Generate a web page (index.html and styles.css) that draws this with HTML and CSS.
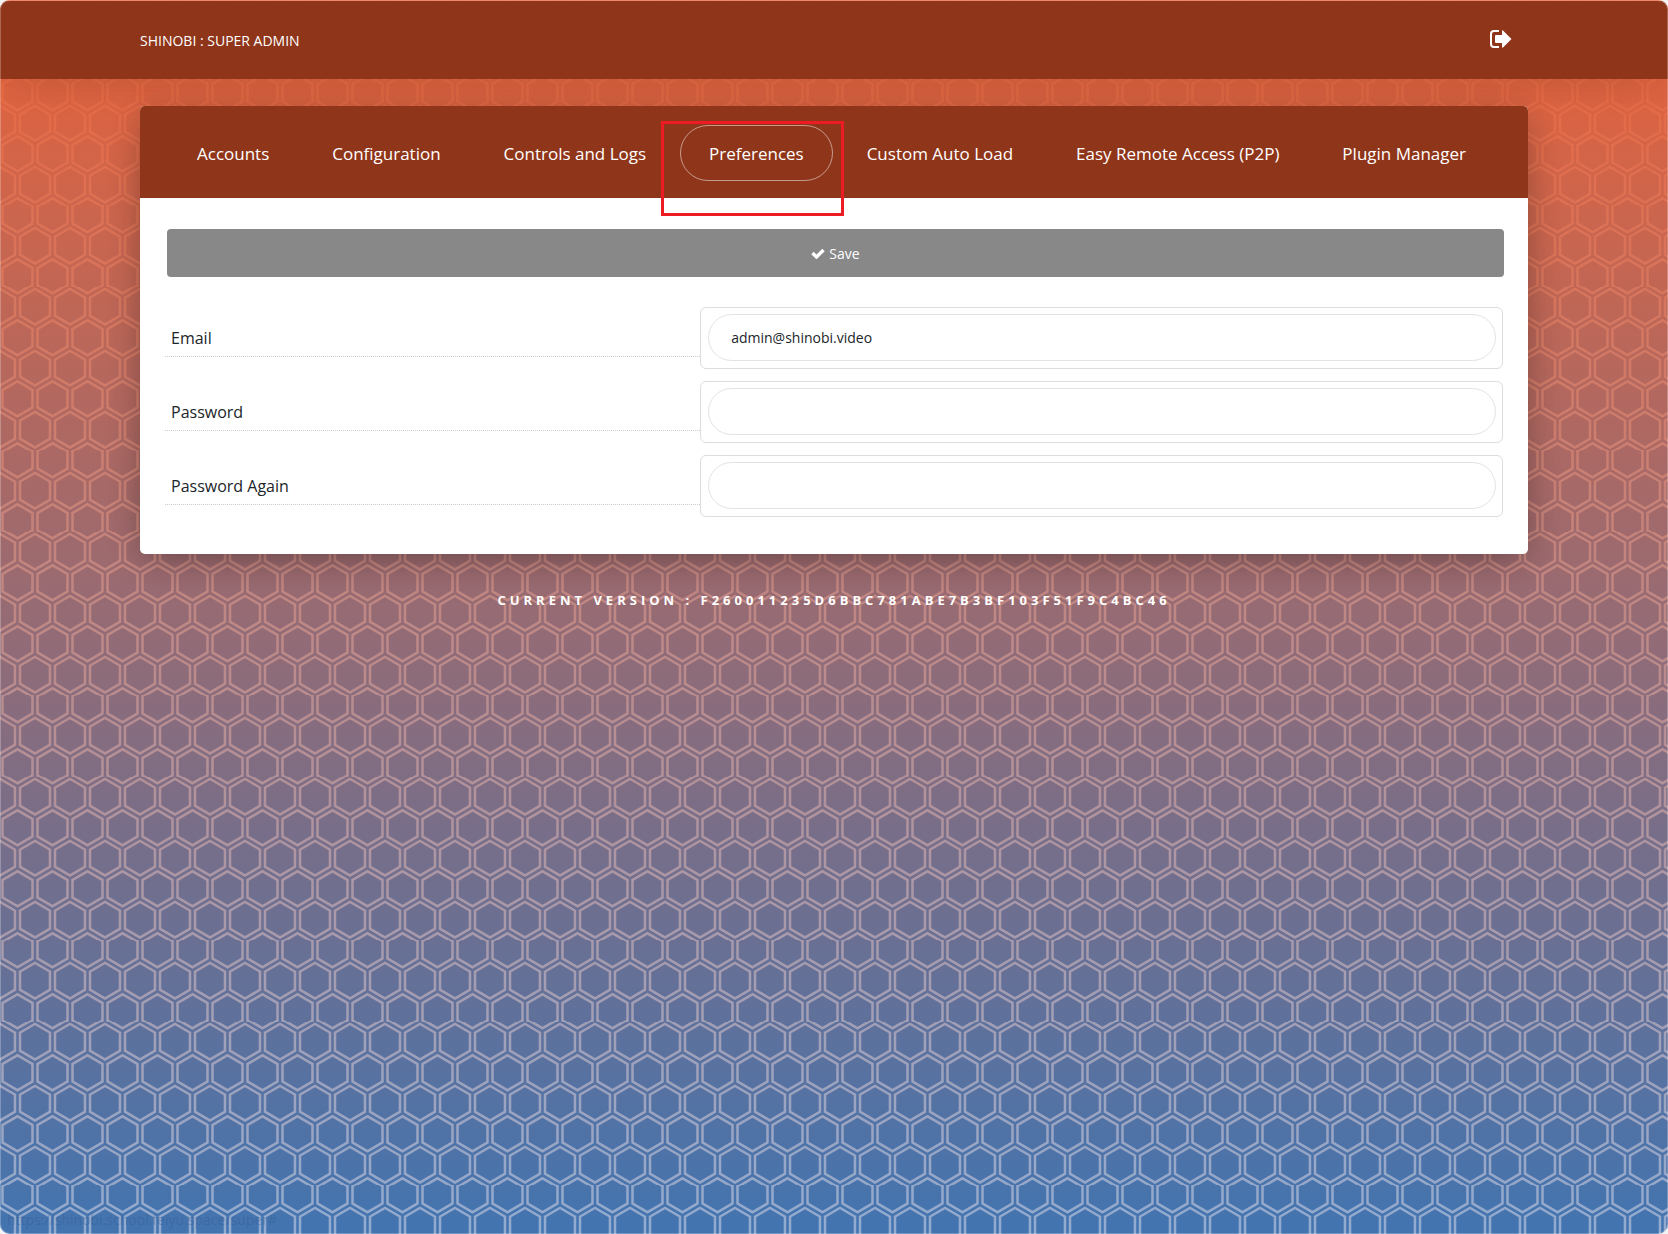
FILE: index.html
```html
<!DOCTYPE html>
<html lang="en">

<head>
    <meta charset="UTF-8">
    <meta name="viewport" content="width=device-width, initial-scale=1.0">
    <title>Shinobi : Super Admin</title>
    <link rel="stylesheet" href="styles.css">
</head>

<body>
    <div class="page">
        <!-- top bar -->
        <header class="navbar">
            <div class="container">
                <a class="brand" href="#">SHINOBI : SUPER ADMIN</a>
                <a class="logout" href="#" aria-label="Logout">
                    <svg viewBox="0 0 22 18" width="22" height="18">
                        <path d="M9 1H4Q1 1 1 4v10q0 3 3 3h5" fill="none" stroke="#fff" stroke-width="2" />
                        <path d="M6 5h6V1q0-1 1-.6L21.500 9 13 17.600q-1 .4-1-.6v-4H6q-1 0-1-1V6q0-1 1-1z" fill="#fff" />
                    </svg>
                </a>
            </div>
        </header>

        <main class="container">
            <div class="card">
                <nav class="tabs">
                    <a href="#">Accounts</a>
                    <a href="#">Configuration</a>
                    <a href="#">Controls and Logs</a>
                    <a class="active" href="#">Preferences</a>
                    <a href="#">Custom Auto Load</a>
                    <a href="#">Easy Remote Access (P2P)</a>
                    <a href="#">Plugin Manager</a>
                </nav>
                <form class="card-body">
                    <button class="save" type="submit">
                        <svg viewBox="0 0 14 11" width="14" height="11">
                            <path d="M1.500 5l4 4L12.500 2" fill="none" stroke="#fff" stroke-width="3.400" />
                        </svg>
                        Save
                    </button>
                    <div class="form-group">
                        <label for="mail">Email</label>
                        <div class="field"><input id="mail" type="text" value="admin@shinobi.video"></div>
                    </div>
                    <div class="form-group">
                        <label for="pass">Password</label>
                        <div class="field"><input id="pass" type="password"></div>
                    </div>
                    <div class="form-group">
                        <label for="pass_again">Password Again</label>
                        <div class="field"><input id="pass_again" type="password"></div>
                    </div>
                </form>
            </div>
            <p class="version">Current Version : f260011235d6bbc781abe7b3bf103f51f9c4bc46</p>
        </main>

        <!-- link preview in the corner -->
        <div class="status">https://shinobi.school.feiyu.space/super#</div>
    </div>
</body>

</html>
```
FILE: styles.css
```css
* {
    box-sizing: border-box;
}

body {
    margin: 0;
    background: #f3f3f3;
    font-family: "Open Sans", "Noto Sans", sans-serif;
    font-size: 16px;
    color: #212529;
}

a {
    color: #fff;
    text-decoration: none;
}

/* hexagons under an orange fade */
.page {
    position: relative;
    min-height: 100vh;
    padding-top: 1px;
    border-radius: 10px;
    overflow: hidden;
    background-color: #4274b0;
    background-image:
        linear-gradient(rgba(241, 97, 50, .95), rgba(241, 97, 50, 0)),
        url("data:image/svg+xml,%3Csvg xmlns='http://www.w3.org/2000/svg' width='28' height='49' viewBox='0 0 28 49'%3E%3Cpath fill='%2392abd0' d='M13.99 9.25l13 7.5v15l-13 7.5L1 31.75v-15l12.99-7.5zM3 17.9v12.7l10.99 6.34 11-6.35V17.9l-11-6.34L3 17.9zM0 15l12.98-7.5V0h-2v6.35L0 12.69v2.3zm0 18.5L12.98 41v8h-2v-6.85L0 35.81v-2.3zM15 0v7.5L27.99 15H28v-2.31h-.01L17 6.35V0h-2zm0 49v-8l12.99-7.5H28v2.31h-.01L17 42.15V49h-2z'/%3E%3C/svg%3E");
    background-size: auto, 35px auto;
    background-position: 0 0, 0 1px;
}

/* thin window edge */
.page::after {
    content: "";
    position: absolute;
    inset: 0;
    border: 1px solid rgba(255, 255, 255, .25);
    border-radius: 10px;
    pointer-events: none;
}

.container {
    width: calc(100% - 32px);
    max-width: 1388px;
    margin: 0 auto;
}

.navbar {
    height: 78px;
    background: #8f3519;
    box-shadow: 0 20px 40px -20px rgba(0, 0, 0, .12), 0 5px 31px 0 rgba(0, 0, 0, .04);
}

.navbar .container {
    display: flex;
    align-items: center;
    justify-content: space-between;
    height: 78px;
}

.brand {
    font-size: 14px;
}

.logout {
    display: flex;
    padding: 0 16px 2px 0;
}

.card {
    margin-top: 27px;
    border-radius: 5px;
    background: #fff;
    box-shadow: 0 10px 38px -10px rgba(0, 0, 0, .3), 0 5px 31px 0 rgba(0, 0, 0, .1);
}

.tabs {
    display: flex;
    justify-content: space-between;
    padding: 19px 33px 17px 28px;
    border-radius: 5px 5px 0 0;
    background: #8f3519;
}

.tabs a {
    height: 56px;
    padding: 0 28px;
    border: 1px solid transparent;
    border-radius: 28px;
    font-size: 17px;
    line-height: 56px;
    white-space: nowrap;
}

.tabs .active {
    position: relative;
    border-color: rgba(255, 255, 255, .5);
}

/* highlight frame */
.tabs .active::after {
    content: "";
    position: absolute;
    inset: -5px -12px -36px -20px;
    border: 3px solid #ed1c24;
}

.card-body {
    padding: 31px 25px 37px;
}

.save {
    display: flex;
    align-items: center;
    justify-content: center;
    gap: 4px;
    width: calc(100% - 1px);
    height: 48px;
    margin: 0 0 30px 2px;
    border: 0;
    border-radius: 4px;
    background: #888;
    color: #fff;
    font: inherit;
    font-size: 14px;
}

.form-group {
    display: grid;
    grid-template-columns: 2fr 3fr;
    align-items: center;
    margin-bottom: 12px;
}

.form-group:last-child {
    margin-bottom: 0;
}

.form-group label {
    height: 38px;
    padding-left: 6px;
    border-bottom: 1px dotted #ccc;
    line-height: 38px;
}

.field {
    height: 62px;
    padding: 6px 6px 6px 7px;
    border: 1px solid #ddd;
    border-radius: 6px;
}

.field input {
    width: 100%;
    height: 47px;
    padding: 0 22px;
    border: 1px solid #e3e3e3;
    border-radius: 24px;
    background: #fff;
    color: #212529;
    font: inherit;
    font-size: 14px;
}

.version {
    margin: 34px 0 0;
    color: #fff;
    font-size: 13px;
    font-weight: 700;
    letter-spacing: 4px;
    line-height: 24px;
    text-align: center;
    text-transform: uppercase;
}

.status {
    position: absolute;
    left: 0;
    bottom: 0;
    padding: 0 7px;
    color: rgba(40, 80, 130, .3);
    font-size: 14px;
    line-height: 28px;
}
```
